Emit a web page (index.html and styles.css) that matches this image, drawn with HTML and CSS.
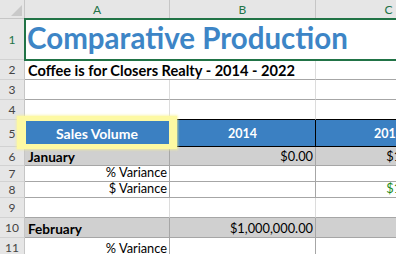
FILE: index.html
```html
<!DOCTYPE html>
<html>
<head>
<meta charset="utf-8">
<link rel="stylesheet" href="styles.css">
</head>
<body>
<div class="sheet">
  <div class="corner"><svg width="24" height="18" viewBox="0 0 24 18"><polygon points="22,5 22,16 11,16" fill="#c9c9c9"/></svg></div>
  <div class="ch">A</div>
  <div class="ch">B</div>
  <div class="ch">C</div>

  <div class="rh sel">1</div>
  <div class="c title">Comparative Production</div>

  <div class="rh">2</div>
  <div class="c sub bb">Coffee is for Closers Realty - 2014 - 2022</div>
  <div class="c bb"></div>

  <div class="rh">3</div>
  <div class="c bb"></div>
  <div class="c bb"></div>
  <div class="c bb"></div>

  <div class="rh">4</div>
  <div class="c kb"></div>
  <div class="c kb"></div>
  <div class="c kb"></div>

  <div class="rh">5</div>
  <div class="c hdr wide">Sales Volume</div>
  <div class="c hdr">2014</div>
  <div class="c hdr">2015</div>

  <div class="rh">6</div>
  <div class="c gray dk b">January</div>
  <div class="c gray dk r">$0.00</div>
  <div class="c gray dk r">$100,000.00</div>

  <div class="rh">7</div>
  <div class="c dk r">% Variance</div>
  <div class="c dk"></div>
  <div class="c dk"></div>

  <div class="rh">8</div>
  <div class="c dk r">$ Variance</div>
  <div class="c dk"></div>
  <div class="c dk r pos">$100,000.00</div>

  <div class="rh">9</div>
  <div class="c bb"></div>
  <div class="c bb"></div>
  <div class="c bb"></div>

  <div class="rh">10</div>
  <div class="c gray dk b">February</div>
  <div class="c gray dk r">$1,000,000.00</div>
  <div class="c gray dk"></div>

  <div class="rh">11</div>
  <div class="c dk r">% Variance</div>
  <div class="c dk"></div>
  <div class="c dk"></div>

  <div class="glow"></div>
</div>
</body>
</html>
```

FILE: styles.css
```css
html, body {
  margin: 0;
  padding: 0;
  background: #ffffff;
}
body {
  width: 396px;
  height: 254px;
  overflow: hidden;
  font-family: Lato, "Open Sans", sans-serif;
  color: #000;
}
.sheet {
  position: relative;
  display: grid;
  grid-template-columns: 25px 145px 146px 146px;
  grid-template-rows: 19px 41px 20px 20px 20px 27px 19px 16px 16px 20px 20px 20px;
}
.corner {
  background: #e6e6e6;
  border-right: 1px solid #c6c6c6;
  border-bottom: 1px solid #c6c6c6;
  box-sizing: border-box;
}
.corner svg { display: block; }
.ch {
  box-sizing: border-box;
  background: #e6e6e6;
  border-right: 1px solid #c6c6c6;
  border-bottom: 1px solid #c6c6c6;
  color: #217346;
  font-size: 12px;
  display: flex;
  align-items: center;
  justify-content: center;
}
.rh {
  box-sizing: border-box;
  background: #e6e6e6;
  border-right: 1px solid #c6c6c6;
  border-bottom: 1px solid #d2d2d2;
  color: #444;
  font-size: 12px;
  display: flex;
  align-items: center;
  justify-content: center;
}
.rh.sel { color: #217346; }
.c {
  box-sizing: border-box;
  border-right: 1px solid #dcdcdc;
  border-bottom: 1px solid #dcdcdc;
  display: flex;
  align-items: flex-end;
  padding: 0 2px 1px 3px;
  font-size: 12.8px;
  white-space: nowrap;
  min-width: 0;
}
.title {
  grid-column: 2 / span 3;
  color: #3d85c6;
  font-weight: 700;
  font-size: 29.5px;
  padding-left: 2px;
  padding-bottom: 4px;
  outline: 2px solid #217346;
  outline-offset: -1px;
  position: relative;
  z-index: 1;
}
.sub {
  grid-column: 2 / span 2;
  font-weight: 700;
  font-size: 14.6px;
  padding-bottom: 0;
}
.bb { border-bottom-color: #a6a6a6; }
.kb { border-bottom-color: #000; }
.dk { border-color: #a6a6a6; }
.hdr {
  background: #3b80c2;
  color: #fff;
  font-weight: 700;
  font-size: 12.5px;
  justify-content: center;
  align-items: center;
  padding: 0;
  border-right-color: #000;
  border-bottom-color: #000;
}
.hdr.wide { font-size: 14px; }
.gray { background: #d0d0d0; }
.b { font-weight: 700; font-size: 13.6px; padding-bottom: 0; }
.r { justify-content: flex-end; }
.pos { color: #1a8a1a; }
.glow {
  position: absolute;
  left: 17px;
  top: 116px;
  width: 160px;
  height: 33px;
  box-sizing: border-box;
  border-style: solid;
  border-color: #fdf9a3;
  border-width: 5px 8px 5px 9px;
  box-shadow: 0 0 2px 1px rgba(250, 244, 150, 0.7);
}
```
